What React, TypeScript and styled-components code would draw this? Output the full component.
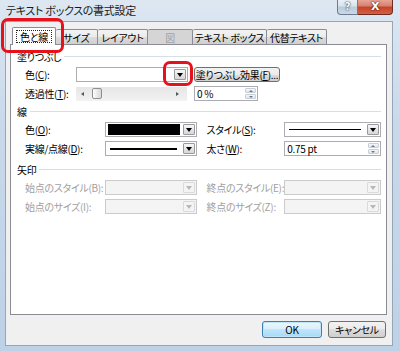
import styled, { createGlobalStyle, css } from "styled-components";

const GlobalStyle = createGlobalStyle`
  html, body { margin: 0; padding: 0; background: #fff; }
  body {
    font-family: "Noto Sans CJK JP", "Noto Sans", sans-serif;
    font-size: 10px;
    font-feature-settings: "palt";
    letter-spacing: -0.3px;
    color: #000;
  }
  * { box-sizing: border-box; }
`;

const Window = styled.div`
  position: relative;
  width: 400px;
  height: 351px;
  display: flex;
  flex-direction: column;
  padding: 0 7px 5px 5px;
  background: linear-gradient(180deg, #dce7f2 0%, #c9d9eb 35%, #bdd1e7 100%);
  overflow: hidden;
`;

const TitleBar = styled.div`
  height: 21px;
  display: flex;
  align-items: flex-start;
`;

const Title = styled.div`
  flex: 1;
  padding: 4px 0 0 1px;
  font-size: 11px;
  line-height: 13px;
  letter-spacing: -0.3px;
  color: #1a1a1a;
`;

const CaptionButton = styled.div<{ $close?: boolean }>`
  width: ${(p) => (p.$close ? 35 : 21)}px;
  height: 16px;
  margin-top: -1px;
  display: flex;
  align-items: center;
  justify-content: center;
  font-family: "DejaVu Sans", sans-serif;
  font-weight: bold;
  border: 1px solid ${(p) => (p.$close ? "#6e2c24" : "#6b7c90")};
  border-top: none;
  ${(p) =>
    p.$close
      ? css`
          border-left: none;
          border-radius: 0 0 4px 0;
          background: linear-gradient(180deg, #e9a99c 0%, #d8826f 45%, #c4442d 55%, #d5603f 100%);
          color: #fff;
          font-size: 11px;
          text-shadow: 0 0 2px #5a1a10, 0 0 1px #5a1a10;
        `
      : css`
          border-radius: 0 0 0 4px;
          background: linear-gradient(180deg, #eef3f8 0%, #d9e3ee 45%, #bccbdb 55%, #cbd8e6 100%);
          color: #fff;
          font-size: 10px;
          text-shadow: 0 0 2px #2c3e55, 0 0 1px #2c3e55;
        `}
`;

const Client = styled.div`
  flex: 1;
  display: flex;
  flex-direction: column;
  background: #f0f0f0;
  border: 1px solid #97a6b7;
  padding: 5px 5px 0 4px;
`;

const TabStrip = styled.div`
  height: 17px;
  display: flex;
  align-items: flex-start;
  padding-left: 2px;
`;

const Tab = styled.div<{ $w: number; $active?: boolean; $disabled?: boolean }>`
  width: ${(p) => p.$w}px;
  height: 15px;
  margin-top: 2px;
  display: flex;
  align-items: center;
  justify-content: center;
  border: 1px solid #898c95;
  border-bottom: none;
  border-left-width: 0;
  border-radius: 2px 2px 0 0;
  background: linear-gradient(180deg, #f3f3f3 0%, #ebebeb 50%, #dddddd 50%, #cfcfcf 100%);
  white-space: nowrap;
  ${(p) =>
    p.$disabled &&
    css`
      background: #d5d5d5;
      color: #a3a3a3;
    `}
  ${(p) =>
    p.$active &&
    css`
      position: relative;
      z-index: 2;
      height: 18px;
      margin-top: 0;
      border-left-width: 1px;
      background: #fff;
    `}
`;

const Focus = styled.span`
  outline: 1px dotted #222;
  outline-offset: 0;
  padding: 0 3px;
  line-height: 11px;
`;

const Panel = styled.div`
  height: 271px;
  background: #fff;
  border: 1px solid #898c95;
  padding: 4px 5px 0 6px;
  display: flex;
  flex-direction: column;
`;

const Section = styled.div<{ $gap: number }>`
  margin-top: ${(p) => p.$gap}px;
  display: flex;
  flex-direction: column;
`;

const GroupHeader = styled.div<{ $after: number }>`
  height: 14px;
  margin-bottom: ${(p) => p.$after}px;
  display: flex;
  align-items: center;
  gap: 3px;
  &::after {
    content: "";
    flex: 1;
    height: 1px;
    background: #d5dfe5;
  }
`;

const Row = styled.div`
  height: 19px;
  display: flex;
  align-items: center;
  padding-left: 8px;
`;

const Label = styled.div<{ $w: number; $disabled?: boolean; $gap?: number }>`
  width: ${(p) => p.$w}px;
  margin-left: ${(p) => p.$gap ?? 0}px;
  white-space: nowrap;
  color: ${(p) => (p.$disabled ? "#a0a0a0" : "#000")};
`;

const Combo = styled.div<{ $w: number; $disabled?: boolean }>`
  width: ${(p) => p.$w}px;
  height: 15px;
  display: flex;
  border: 1px solid ${(p) => (p.$disabled ? "#cbcbcb" : "#abadb3")};
  background: ${(p) => (p.$disabled ? "#f4f4f4" : "#fff")};
`;

const ComboValue = styled.div`
  flex: 1;
  display: flex;
  align-items: center;
  padding: 1px 2px;
`;

const Swatch = styled.div`
  flex: 1;
  align-self: stretch;
  background: #000;
`;

const LineSample = styled.div<{ $t: number }>`
  flex: 1;
  height: ${(p) => p.$t}px;
  margin: 0 3px 0 2px;
  background: #000;
`;

const DropButton = styled.div<{ $w: number; $disabled?: boolean }>`
  width: ${(p) => p.$w}px;
  margin: 1px;
  display: flex;
  align-items: center;
  justify-content: center;
  border: 1px solid ${(p) => (p.$disabled ? "#dadada" : "#9a9a9a")};
  border-radius: 1px;
  background: ${(p) =>
    p.$disabled ? "#f4f4f4" : "linear-gradient(180deg, #f6f6f6 0%, #e6e6e6 50%, #d6d6d6 100%)"};
`;

const Arrow = styled.span<{ $disabled?: boolean }>`
  width: 0;
  height: 0;
  border-left: 3px solid transparent;
  border-right: 3px solid transparent;
  border-top: 4px solid ${(p) => (p.$disabled ? "#b8b8b8" : "#000")};
`;

const PushButton = styled.div<{ $w: number }>`
  width: ${(p) => p.$w}px;
  height: 15px;
  margin-left: 6px;
  display: flex;
  align-items: center;
  justify-content: center;
  border: 1px solid #707070;
  border-radius: 3px;
  background: linear-gradient(180deg, #f2f2f2 0%, #ebebeb 50%, #dddddd 50%, #cfcfcf 100%);
  white-space: nowrap;
`;

const Slider = styled.div`
  width: 111px;
  height: 14px;
  display: flex;
  align-items: center;
  background: linear-gradient(180deg, #e6e6e6 0%, #f2f2f2 100%);
`;

const SliderArrow = styled.span<{ $right?: boolean }>`
  width: 0;
  height: 0;
  margin: ${(p) => (p.$right ? "0 8px 0 auto" : "0 0 0 5px")};
  border-top: 2.5px solid transparent;
  border-bottom: 2.5px solid transparent;
  ${(p) =>
    p.$right
      ? css`border-left: 3px solid #555;`
      : css`border-right: 3px solid #555;`}
`;

const Thumb = styled.div`
  width: 10px;
  height: 11px;
  margin-left: 8px;
  border: 1px solid #8f8f8f;
  border-radius: 2px;
  background: linear-gradient(90deg, #fdfdfd 0%, #e9e9e9 50%, #d8d8d8 100%);
`;

const Spin = styled.div<{ $w: number; $gap?: number }>`
  width: ${(p) => p.$w}px;
  height: 15px;
  margin-left: ${(p) => p.$gap ?? 0}px;
  display: flex;
  border: 1px solid #abadb3;
  background: #fff;
`;

const SpinText = styled.div`
  flex: 1;
  display: flex;
  align-items: center;
  padding-left: 2px;
`;

const SpinButtons = styled.div`
  width: 11px;
  margin: 1px;
  display: flex;
  flex-direction: column;
  gap: 1px;
`;

const SpinButton = styled.div`
  flex: 1;
  display: flex;
  align-items: center;
  justify-content: center;
  border: 1px solid #c8cfd7;
  border-radius: 1px;
  background: linear-gradient(180deg, #f5f8fb 0%, #dde5ee 100%);
`;

const SpinArrow = styled.span<{ $up?: boolean }>`
  width: 0;
  height: 0;
  border-left: 2px solid transparent;
  border-right: 2px solid transparent;
  ${(p) =>
    p.$up
      ? css`border-bottom: 2px solid #6b7a8a;`
      : css`border-top: 2px solid #6b7a8a;`}
`;

const ButtonRow = styled.div`
  display: flex;
  justify-content: flex-end;
  gap: 6px;
  padding: 6px 1px 0 0;
`;

const DialogButton = styled.div<{ $w: number; $default?: boolean }>`
  width: ${(p) => p.$w}px;
  height: 17px;
  display: flex;
  align-items: center;
  justify-content: center;
  border: 1px solid #707070;
  border-radius: 3px;
  background: linear-gradient(180deg, #f2f2f2 0%, #ebebeb 50%, #dddddd 50%, #cfcfcf 100%);
  ${(p) =>
    p.$default &&
    css`
      border-color: #3c7fb1;
      box-shadow: inset 0 0 0 1px #bfe3f7;
      background: linear-gradient(180deg, #eaf6fd 0%, #d9f0fc 50%, #bee6fd 50%, #a7d9f5 100%);
    `}
`;

const Mark = styled.div<{ $x: number; $y: number; $w: number; $h: number }>`
  position: absolute;
  left: ${(p) => p.$x}px;
  top: ${(p) => p.$y}px;
  width: ${(p) => p.$w}px;
  height: ${(p) => p.$h}px;
  border: 3px solid #e5121b;
  border-radius: 7px;
  pointer-events: none;
  z-index: 5;
`;

const tabs = [
  { label: "サイズ", w: 42 },
  { label: "レイアウト", w: 50 },
  { label: "図", w: 45, disabled: true },
  { label: "テキスト ボックス", w: 74 },
  { label: "代替テキスト", w: 60 },
];

const DropDown = ({ disabled }: { disabled?: boolean }) => (
  <DropButton $w={12} $disabled={disabled}>
    <Arrow $disabled={disabled} />
  </DropButton>
);

const SpinBox = ({ w, gap, value }: { w: number; gap?: number; value: string }) => (
  <Spin $w={w} $gap={gap}>
    <SpinText>{value}</SpinText>
    <SpinButtons>
      <SpinButton>
        <SpinArrow $up />
      </SpinButton>
      <SpinButton>
        <SpinArrow />
      </SpinButton>
    </SpinButtons>
  </Spin>
);

export default function App() {
  return (
    <>
      <GlobalStyle />
      <Window>
        <TitleBar>
          <Title>テキスト ボックスの書式設定</Title>
          <CaptionButton>?</CaptionButton>
          <CaptionButton $close>X</CaptionButton>
        </TitleBar>
        <Client>
          <TabStrip>
            <Tab $w={44} $active>
              <Focus>色と線</Focus>
            </Tab>
            {tabs.map((t) => (
              <Tab key={t.label} $w={t.w} $disabled={t.disabled}>
                {t.label}
              </Tab>
            ))}
          </TabStrip>
          <Panel>
            <Section $gap={0}>
              <GroupHeader $after={2}>塗りつぶし</GroupHeader>
              <Row>
                <Label $w={51}>
                  色(<u>C</u>):
                </Label>
                <Combo $w={112}>
                  <ComboValue />
                  <DropDown />
                </Combo>
                <PushButton $w={86}>
                  塗りつぶし効果(<u>F</u>)...
                </PushButton>
              </Row>
              <Row>
                <Label $w={51}>
                  透過性(<u>T</u>):
                </Label>
                <Slider>
                  <SliderArrow />
                  <Thumb />
                  <SliderArrow $right />
                </Slider>
                <SpinBox w={64} gap={7} value="0 %" />
              </Row>
            </Section>
            <Section $gap={1}>
              <GroupHeader $after={2}>線</GroupHeader>
              <Row>
                <Label $w={80}>
                  色(<u>O</u>):
                </Label>
                <Combo $w={92}>
                  <ComboValue>
                    <Swatch />
                  </ComboValue>
                  <DropDown />
                </Combo>
                <Label $w={78} $gap={10}>
                  スタイル(<u>S</u>):
                </Label>
                <Combo $w={97}>
                  <ComboValue>
                    <LineSample $t={1} />
                  </ComboValue>
                  <DropDown />
                </Combo>
              </Row>
              <Row>
                <Label $w={80}>
                  実線/点線(<u>D</u>):
                </Label>
                <Combo $w={92}>
                  <ComboValue>
                    <LineSample $t={2} />
                  </ComboValue>
                  <DropDown />
                </Combo>
                <Label $w={78} $gap={10}>
                  太さ(<u>W</u>):
                </Label>
                <SpinBox w={97} value="0.75 pt" />
              </Row>
            </Section>
            <Section $gap={4}>
              <GroupHeader $after={2}>矢印</GroupHeader>
              <Row>
                <Label $w={80} $disabled>
                  始点のスタイル(B):
                </Label>
                <Combo $w={92} $disabled>
                  <ComboValue />
                  <DropDown disabled />
                </Combo>
                <Label $w={78} $gap={10} $disabled>
                  終点のスタイル(E):
                </Label>
                <Combo $w={97} $disabled>
                  <ComboValue />
                  <DropDown disabled />
                </Combo>
              </Row>
              <Row>
                <Label $w={80} $disabled>
                  始点のサイズ(I):
                </Label>
                <Combo $w={92} $disabled>
                  <ComboValue />
                  <DropDown disabled />
                </Combo>
                <Label $w={78} $gap={10} $disabled>
                  終点のサイズ(Z):
                </Label>
                <Combo $w={97} $disabled>
                  <ComboValue />
                  <DropDown disabled />
                </Combo>
              </Row>
            </Section>
          </Panel>
          <ButtonRow>
            <DialogButton $w={60} $default>
              OK
            </DialogButton>
            <DialogButton $w={58}>キャンセル</DialogButton>
          </ButtonRow>
        </Client>
        <Mark $x={1} $y={18} $w={63} $h={35} />
        <Mark $x={163} $y={61} $w={30} $h={25} />
      </Window>
    </>
  );
}
